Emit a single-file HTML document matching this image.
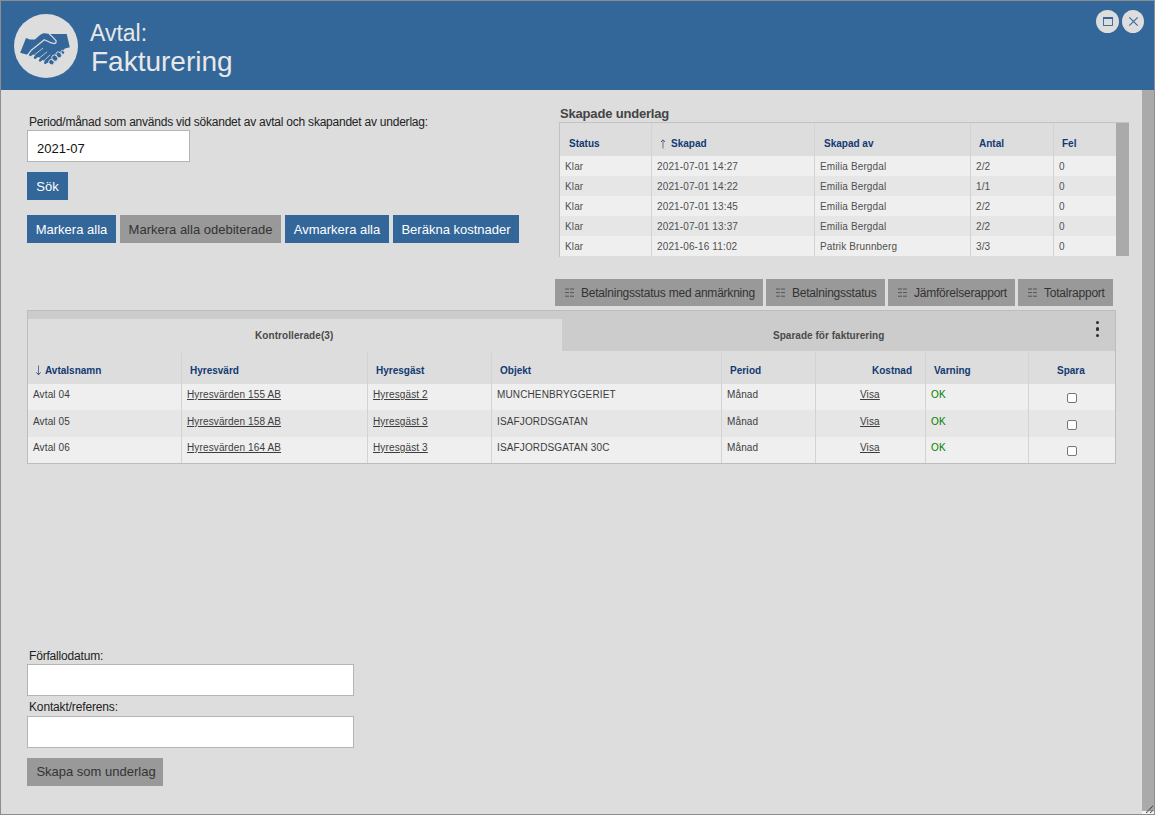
<!DOCTYPE html>
<html><head><meta charset="utf-8">
<style>
*{box-sizing:border-box;margin:0;padding:0}
html,body{width:1155px;height:815px;overflow:hidden;background:#dddddd;font-family:"Liberation Sans",sans-serif;}
.a{position:absolute;white-space:nowrap}
#win{position:absolute;left:0;top:0;width:1155px;height:815px;border:1px solid #8d8d8d;}
#hdr{position:absolute;left:1px;top:1px;width:1153px;height:89px;background:#336699;}
.circ{position:absolute;border-radius:50%;background:#dddddd}
.t{position:absolute;white-space:nowrap;line-height:1}
.btn{position:absolute;height:28px;background:#336699;color:#fff;font-size:13px;line-height:27px;padding-top:1px;text-align:center}
.gbtn{position:absolute;height:28px;background:#999999;color:#333;font-size:13px;line-height:27px;padding-top:1px;text-align:center}
.inp{position:absolute;background:#fff;border:1px solid #b4b4b4}
.rbtn{position:absolute;top:279px;height:27px;background:#999999;color:#333;font-size:12px;letter-spacing:-0.22px;line-height:27px}
.rico{position:absolute;left:10px;top:9px;width:9px;height:9px}
.vl{position:absolute;width:1px;background:#d3d3d3}
.th{position:absolute;color:#113a72;font-size:10px;font-weight:bold;line-height:1;margin-top:1px}
.td{position:absolute;color:#3c3c3c;font-size:10px;line-height:1;margin-top:1px;letter-spacing:0.13px}
.u{text-decoration:underline}
.s{color:#505050}
.cb{position:absolute;width:10px;height:10px;border:1px solid #767676;border-radius:2px;background:#fff}
</style></head><body>
<div id="win"></div>
<div id="hdr"></div>
<!-- icon circle -->
<div class="circ" style="left:14px;top:14px;width:64px;height:64px"></div>
<svg class="a" style="left:0;top:0" width="90" height="90" viewBox="0 0 90 90">
  <path fill="#336699" d="M20.2,52.8 L26,37.9 L29.8,39.4 L34.9,39.4 L40,35.1 C42,33.6 43.5,33.1 44.7,33.2 L47.9,33.7 L49.6,34 L66.7,33.9 L69.8,47.3 L65,48.4 L62,51.5 L58,55 L54,58.5 L50.5,62 L47,63 L40,58 L35,55.5 L30.5,53.3 L27.4,54.4 L26.4,54.6 Z"/>
  <g stroke="#336699" stroke-linecap="round" fill="none">
    <path stroke-width="3" d="M43,44 L30.4,54.6"/>
    <path stroke-width="2.9" d="M46,48.3 L35.2,57.5"/>
    <path stroke-width="2.7" d="M49,52 L40.2,60.3"/>
    <path stroke-width="2.6" d="M51.5,55 L45.3,62.7"/>
  </g>
  <g fill="#336699" stroke="#dddddd" stroke-width="0.9">
    <ellipse cx="51.4" cy="62.2" rx="2.9" ry="2.5" transform="rotate(40 51.4 62.2)"/>
    <ellipse cx="54.8" cy="58.1" rx="3.4" ry="2.7" transform="rotate(50 54.8 58.1)"/>
    <ellipse cx="58.8" cy="54.9" rx="3.3" ry="2.5" transform="rotate(52 58.8 54.9)"/>
    <ellipse cx="62.8" cy="52.3" rx="2.2" ry="1.6" transform="rotate(52 62.8 52.3)"/>
  </g>
  <g stroke="#dddddd" fill="none" stroke-linecap="round" stroke-linejoin="round">
    <path stroke-width="1.25" d="M27.6,55.2 L31,50.6 L44.3,39.7 L49.8,42.3 L54.3,43.6 Q56.6,43.2 56,40.6 L52,36.4 L49.6,34.2"/>
    <path stroke-width="0.8" d="M32.3,56.6 L42.7,48.3"/>
    <path stroke-width="0.8" d="M37.5,59.5 L46.8,52.1"/>
    <path stroke-width="0.8" d="M42.6,62.2 L50,54.9"/>
  </g>
</svg>
<div class="t" style="left:90px;top:22px;font-size:23px;color:#e8e8e8">Avtal:</div>
<div class="t" style="left:91px;top:48px;font-size:28px;color:#e8e8e8">Fakturering</div>
<!-- window buttons -->
<div class="circ" style="left:1096px;top:10px;width:23px;height:23px"></div>
<svg class="a" style="left:1100px;top:14px" width="16" height="16" viewBox="0 0 16 16"><rect x="3.5" y="3.5" width="9" height="8" fill="none" stroke="#336699" stroke-width="0.9"/><path d="M3,4 H13" stroke="#336699" stroke-width="2"/></svg>
<div class="circ" style="left:1122px;top:10px;width:22px;height:23px"></div>
<svg class="a" style="left:1128px;top:16px" width="11" height="11" viewBox="0 0 11 11"><path d="M1.3,1.3 L9.7,9.7 M9.7,1.3 L1.3,9.7" stroke="#336699" stroke-width="1.1"/></svg>
<!-- right scrollbar -->
<div class="a" style="left:1142px;top:90px;width:12px;height:721px;background:#aaaaaa"></div>
<div class="a" style="left:1142px;top:811px;width:12px;height:3px;background:#f4f4f4"></div>
<svg class="a" style="left:1140px;top:800px" width="15" height="15" viewBox="0 0 15 15"><path d="M6.3,12.8 L12.9,5.9 M10.2,12.8 L12.9,10" stroke="#444" stroke-width="1.2" stroke-dasharray="1.2 0.5"/></svg>

<!-- left top form -->
<div class="t" style="left:29px;top:116px;font-size:12px;color:#222;letter-spacing:-0.23px">Period/månad som används vid sökandet av avtal och skapandet av underlag:</div>
<div class="inp" style="left:27px;top:130px;width:163px;height:32px"></div>
<div class="t" style="left:37px;top:142px;font-size:13px;color:#111">2021-07</div>
<div class="btn" style="left:27px;top:172px;width:41px">Sök</div>
<div class="btn" style="left:27px;top:215px;width:89px">Markera alla</div>
<div class="gbtn" style="left:120px;top:215px;width:161px">Markera alla odebiterade</div>
<div class="btn" style="left:285px;top:215px;width:104px">Avmarkera alla</div>
<div class="btn" style="left:393px;top:215px;width:126px">Beräkna kostnader</div>

<!-- Skapade underlag -->
<div class="t" style="left:560px;top:107px;font-size:13px;font-weight:bold;color:#444;letter-spacing:-0.18px">Skapade underlag</div>
<div class="a" style="left:559px;top:122px;width:570px;height:135px;border:1px solid #c2c2c2;border-right:none;border-bottom:none;background:#dddddd"></div>
<div class="a" style="left:560px;top:156px;width:556px;height:20px;background:#efefef"></div>
<div class="a" style="left:560px;top:176px;width:556px;height:20px;background:#e6e6e6"></div>
<div class="a" style="left:560px;top:196px;width:556px;height:20px;background:#efefef"></div>
<div class="a" style="left:560px;top:216px;width:556px;height:20px;background:#e6e6e6"></div>
<div class="a" style="left:560px;top:236px;width:556px;height:20px;background:#efefef"></div>
<div class="vl" style="left:651px;top:123px;height:133px"></div>
<div class="vl" style="left:814px;top:123px;height:133px"></div>
<div class="vl" style="left:970px;top:123px;height:133px"></div>
<div class="vl" style="left:1053px;top:123px;height:133px"></div>
<div class="a" style="left:1116px;top:123px;width:13px;height:133px;background:#aaaaaa"></div>
<div class="th" style="left:569px;top:138px">Status</div>
<svg class="a" style="left:660px;top:139px" width="6" height="10" viewBox="0 0 6 10"><path d="M3,1 V9.5" stroke="#7d6b78" stroke-width="1"/><path d="M1,3 L3,0.8 L5,3" stroke="#4a5a90" stroke-width="1" fill="none"/></svg>
<div class="th" style="left:671px;top:138px">Skapad</div>
<div class="th" style="left:824px;top:138px">Skapad av</div>
<div class="th" style="left:979px;top:138px">Antal</div>
<div class="th" style="left:1062px;top:138px">Fel</div>

<div class="td s" style="left:565px;top:161px">Klar</div>
<div class="td s" style="left:657px;top:161px">2021-07-01 14:27</div>
<div class="td s" style="left:820px;top:161px">Emilia Bergdal</div>
<div class="td s" style="left:976px;top:161px">2/2</div>
<div class="td s" style="left:1059px;top:161px">0</div>

<div class="td s" style="left:565px;top:181px">Klar</div>
<div class="td s" style="left:657px;top:181px">2021-07-01 14:22</div>
<div class="td s" style="left:820px;top:181px">Emilia Bergdal</div>
<div class="td s" style="left:976px;top:181px">1/1</div>
<div class="td s" style="left:1059px;top:181px">0</div>

<div class="td s" style="left:565px;top:201px">Klar</div>
<div class="td s" style="left:657px;top:201px">2021-07-01 13:45</div>
<div class="td s" style="left:820px;top:201px">Emilia Bergdal</div>
<div class="td s" style="left:976px;top:201px">2/2</div>
<div class="td s" style="left:1059px;top:201px">0</div>

<div class="td s" style="left:565px;top:221px">Klar</div>
<div class="td s" style="left:657px;top:221px">2021-07-01 13:37</div>
<div class="td s" style="left:820px;top:221px">Emilia Bergdal</div>
<div class="td s" style="left:976px;top:221px">2/2</div>
<div class="td s" style="left:1059px;top:221px">0</div>

<div class="td s" style="left:565px;top:241px">Klar</div>
<div class="td s" style="left:657px;top:241px">2021-06-16 11:02</div>
<div class="td s" style="left:820px;top:241px">Patrik Brunnberg</div>
<div class="td s" style="left:976px;top:241px">3/3</div>
<div class="td s" style="left:1059px;top:241px">0</div>

<!-- report buttons -->
<div class="rbtn" style="left:555px;width:208px"><svg class="rico" viewBox="0 0 9 9"><path d="M0,1h4M5,1h4M0,4.6h4M5,4.6h4M0,8.2h4M5,8.2h4" stroke="#555" stroke-width="1"/></svg><span style="position:absolute;left:26px;top:1px">Betalningsstatus med anmärkning</span></div>
<div class="rbtn" style="left:766px;width:119px"><svg class="rico" viewBox="0 0 9 9"><path d="M0,1h4M5,1h4M0,4.6h4M5,4.6h4M0,8.2h4M5,8.2h4" stroke="#555" stroke-width="1"/></svg><span style="position:absolute;left:26px;top:1px">Betalningsstatus</span></div>
<div class="rbtn" style="left:888px;width:127px"><svg class="rico" viewBox="0 0 9 9"><path d="M0,1h4M5,1h4M0,4.6h4M5,4.6h4M0,8.2h4M5,8.2h4" stroke="#555" stroke-width="1"/></svg><span style="position:absolute;left:26px;top:1px">Jämförelserapport</span></div>
<div class="rbtn" style="left:1018px;width:95px"><svg class="rico" viewBox="0 0 9 9"><path d="M0,1h4M5,1h4M0,4.6h4M5,4.6h4M0,8.2h4M5,8.2h4" stroke="#555" stroke-width="1"/></svg><span style="position:absolute;left:26px;top:1px">Totalrapport</span></div>

<!-- main grid -->
<div class="a" style="left:27px;top:310px;width:1089px;height:154px;border:1px solid #bdbdbd;background:#dddddd"></div>
<div class="a" style="left:28px;top:311px;width:1087px;height:40px;background:#cccccc"></div>
<div class="a" style="left:28px;top:319px;width:534px;height:32px;background:#dddddd"></div>
<div class="t" style="left:255px;top:331px;font-size:10px;font-weight:bold;color:#4a4a4a;letter-spacing:0.07px">Kontrollerade(3)</div>
<div class="t" style="left:773px;top:331px;font-size:10px;font-weight:bold;color:#4a4a4a;letter-spacing:0.03px">Sparade för fakturering</div>
<div class="a" style="left:1095.7px;top:320.8px;width:3.4px;height:3.4px;border-radius:50%;background:#2a2a2a"></div>
<div class="a" style="left:1095.7px;top:327.2px;width:3.4px;height:3.4px;border-radius:50%;background:#2a2a2a"></div>
<div class="a" style="left:1095.7px;top:333.6px;width:3.4px;height:3.4px;border-radius:50%;background:#2a2a2a"></div>

<div class="a" style="left:28px;top:384px;width:1087px;height:26px;background:#efefef"></div>
<div class="a" style="left:28px;top:410px;width:1087px;height:27px;background:#e6e6e6"></div>
<div class="a" style="left:28px;top:437px;width:1087px;height:26px;background:#efefef"></div>
<div class="vl" style="left:181px;top:352px;height:111px"></div>
<div class="vl" style="left:367px;top:352px;height:111px"></div>
<div class="vl" style="left:491px;top:352px;height:111px"></div>
<div class="vl" style="left:721px;top:352px;height:111px"></div>
<div class="vl" style="left:815px;top:352px;height:111px"></div>
<div class="vl" style="left:925px;top:352px;height:111px"></div>
<div class="vl" style="left:1028px;top:352px;height:111px"></div>

<svg class="a" style="left:35px;top:365px" width="7" height="11" viewBox="0 0 7 11"><path d="M3.5,0.5 V9.5" stroke="#6070a8" stroke-width="1"/><path d="M1.5,7.5 L3.5,9.8 L5.5,7.5" stroke="#334080" stroke-width="1" fill="none"/></svg>
<div class="th" style="left:45px;top:365px">Avtalsnamn</div>
<div class="th" style="left:190px;top:365px">Hyresvärd</div>
<div class="th" style="left:376px;top:365px">Hyresgäst</div>
<div class="th" style="left:500px;top:365px">Objekt</div>
<div class="th" style="left:730px;top:365px">Period</div>
<div class="th" style="left:872px;top:365px">Kostnad</div>
<div class="th" style="left:934px;top:365px">Varning</div>
<div class="th" style="left:1057px;top:365px">Spara</div>

<div class="td" style="left:33px;top:389px">Avtal 04</div>
<div class="td u" style="left:187px;top:389px">Hyresvärden 155 AB</div>
<div class="td u" style="left:373px;top:389px">Hyresgäst 2</div>
<div class="td" style="left:497px;top:389px">MUNCHENBRYGGERIET</div>
<div class="td" style="left:727px;top:389px">Månad</div>
<div class="td u" style="left:860px;top:389px">Visa</div>
<div class="td" style="left:930px;top:389px;color:#008000;margin-left:1px">OK</div>
<div class="cb" style="left:1067px;top:393px"></div>

<div class="td" style="left:33px;top:416px">Avtal 05</div>
<div class="td u" style="left:187px;top:416px">Hyresvärden 158 AB</div>
<div class="td u" style="left:373px;top:416px">Hyresgäst 3</div>
<div class="td" style="left:497px;top:416px">ISAFJORDSGATAN</div>
<div class="td" style="left:727px;top:416px">Månad</div>
<div class="td u" style="left:860px;top:416px">Visa</div>
<div class="td" style="left:930px;top:416px;color:#008000;margin-left:1px">OK</div>
<div class="cb" style="left:1067px;top:420px"></div>

<div class="td" style="left:33px;top:442px">Avtal 06</div>
<div class="td u" style="left:187px;top:442px">Hyresvärden 164 AB</div>
<div class="td u" style="left:373px;top:442px">Hyresgäst 3</div>
<div class="td" style="left:497px;top:442px">ISAFJORDSGATAN 30C</div>
<div class="td" style="left:727px;top:442px">Månad</div>
<div class="td u" style="left:860px;top:442px">Visa</div>
<div class="td" style="left:930px;top:442px;color:#008000;margin-left:1px">OK</div>
<div class="cb" style="left:1067px;top:446px"></div>

<!-- bottom form -->
<div class="t" style="left:29px;top:650px;font-size:12px;color:#222;letter-spacing:-0.18px">Förfallodatum:</div>
<div class="inp" style="left:27px;top:664px;width:327px;height:32px"></div>
<div class="t" style="left:29px;top:701px;font-size:12px;color:#222;letter-spacing:-0.15px">Kontakt/referens:</div>
<div class="inp" style="left:27px;top:716px;width:327px;height:32px"></div>
<div class="gbtn" style="left:27px;top:758px;width:136px;padding-top:0;line-height:28px;padding-left:2px">Skapa som underlag</div>
</body></html>
